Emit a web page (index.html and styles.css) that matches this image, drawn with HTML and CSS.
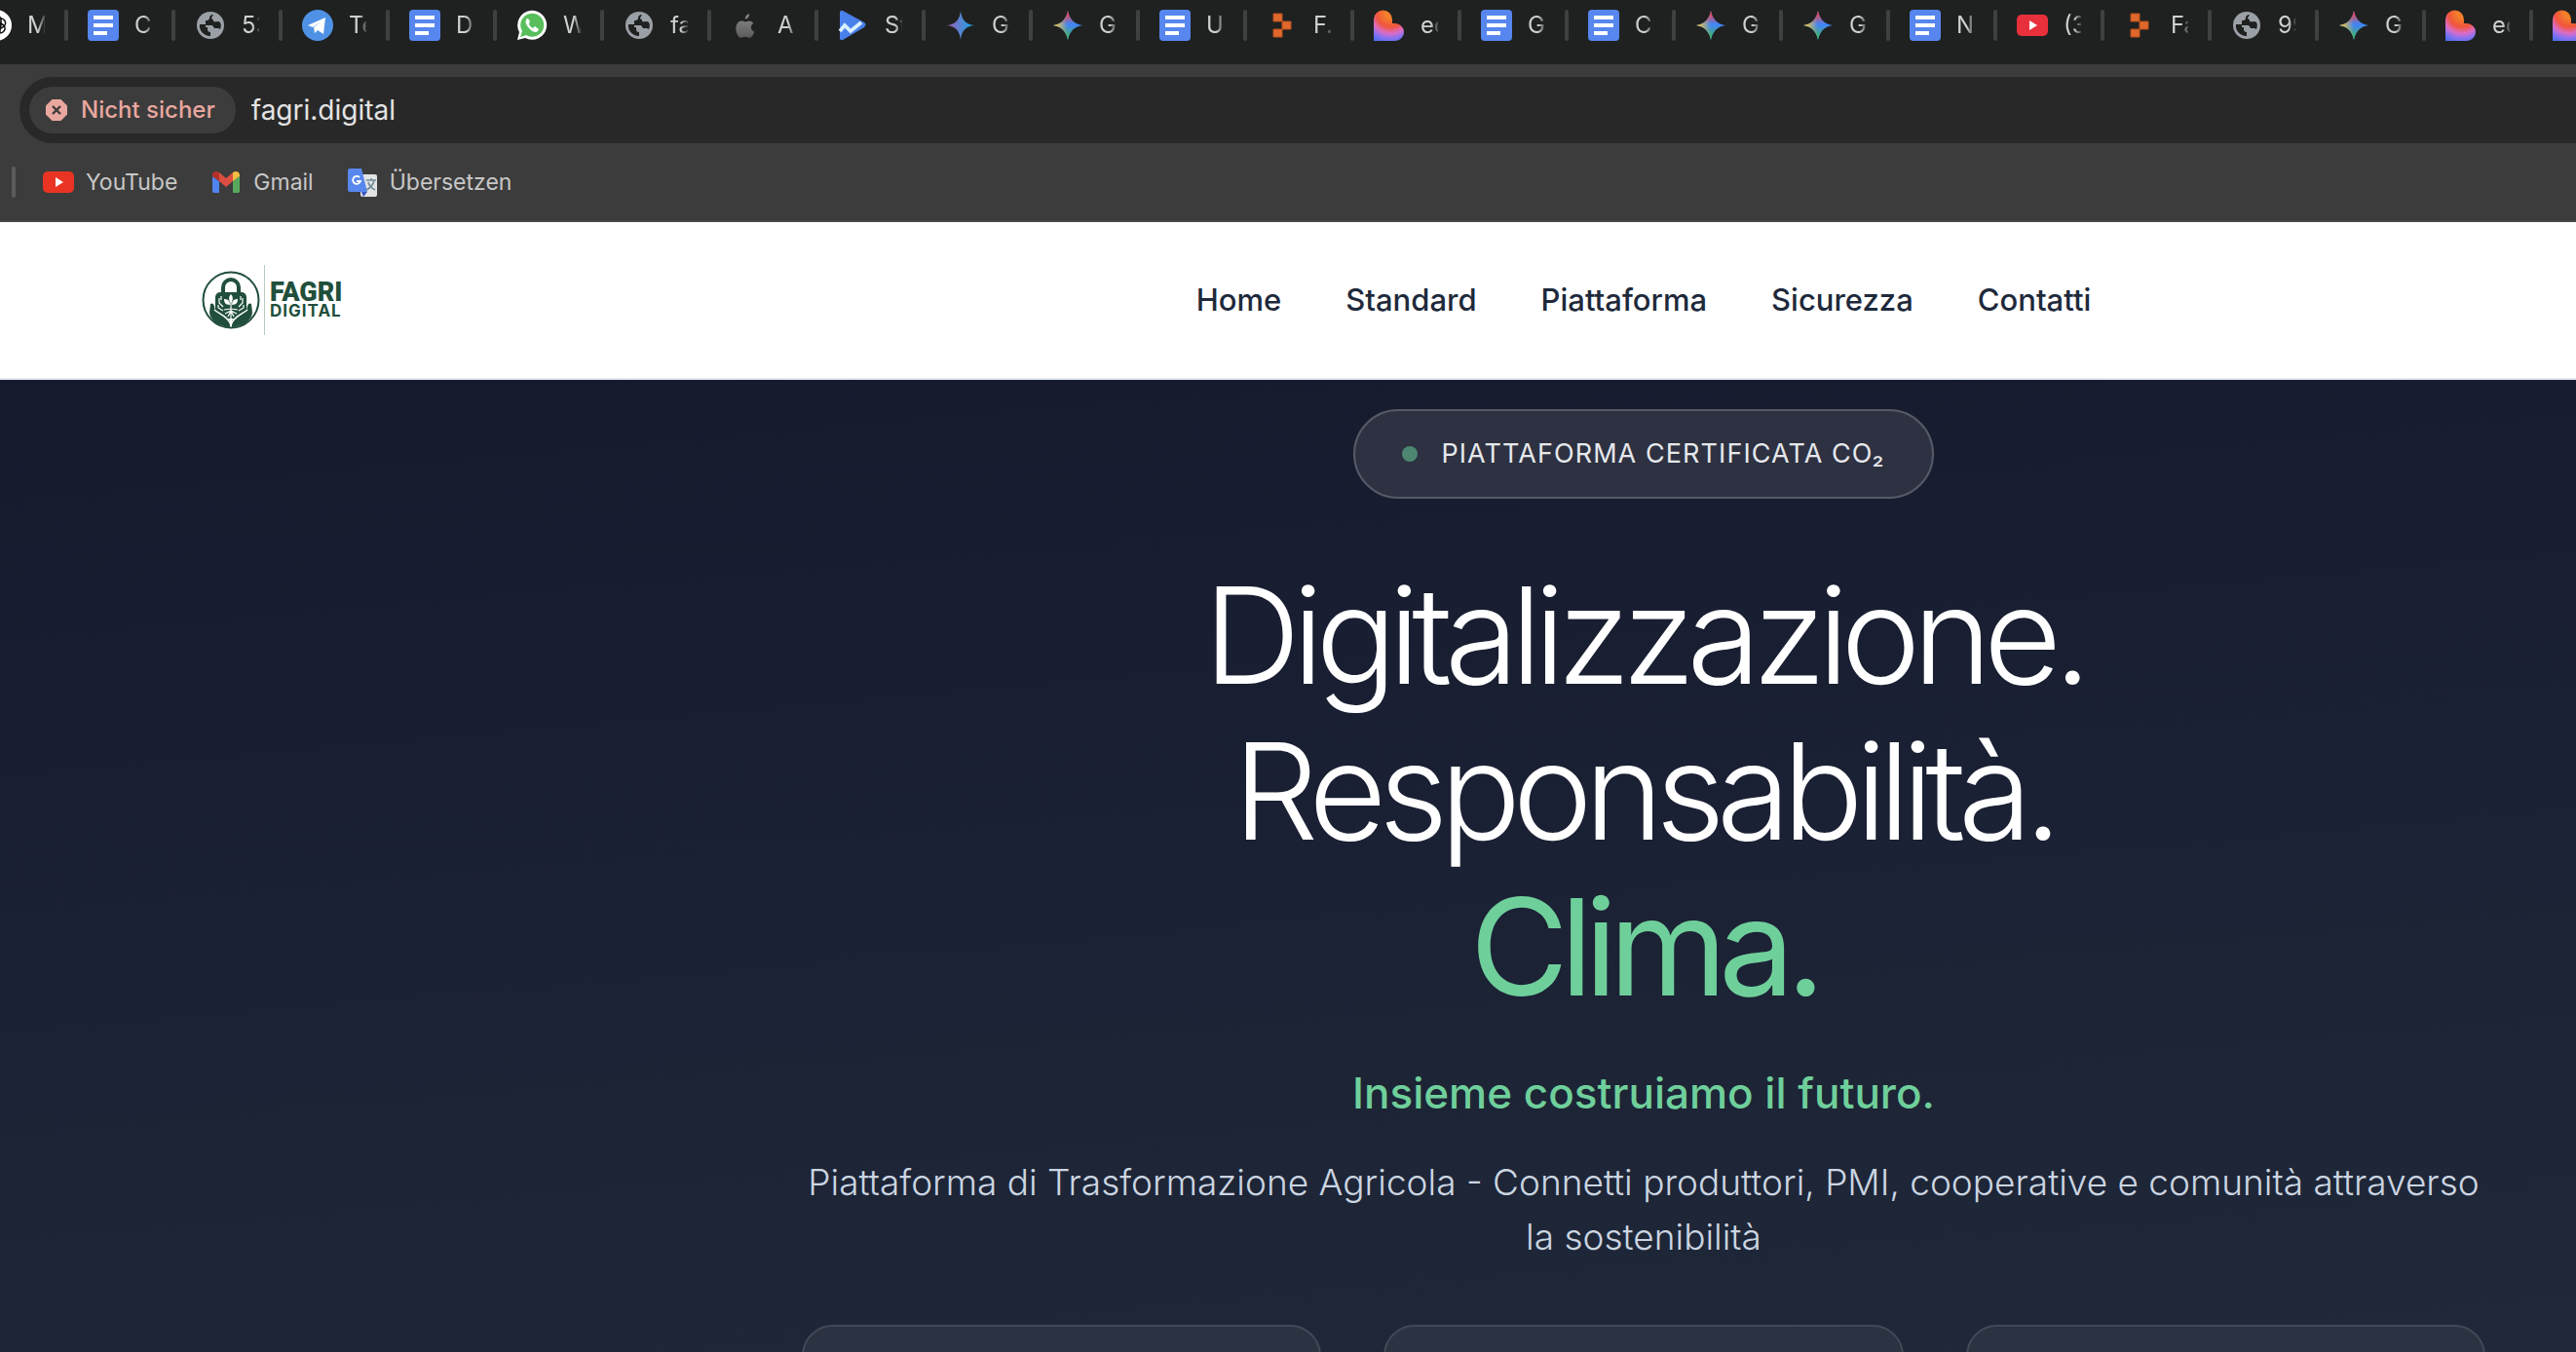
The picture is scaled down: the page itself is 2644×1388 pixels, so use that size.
FILE: index.html
```html
<!DOCTYPE html>
<html lang="it">
<head>
<meta charset="utf-8">
<title>fagri.digital</title>
<link rel="stylesheet" href="styles.css">
</head>
<body>
<svg class="defs" aria-hidden="true">
  <defs>
    <linearGradient id="gemBlue" x1="0" x2="1"><stop offset="0.1" stop-color="#9168c0"/><stop offset="0.5" stop-color="#5684d1"/><stop offset="0.9" stop-color="#1ba1e3"/></linearGradient>
    <linearGradient id="gemRed" x1="0" y1="0" x2="0" y2="1"><stop offset="0.1" stop-color="#f0434c"/><stop offset="0.45" stop-color="#f0434c" stop-opacity="0"/></linearGradient>
    <linearGradient id="gemYellow" x1="0" y1="0" x2="1" y2="0"><stop offset="0.05" stop-color="#fcc934"/><stop offset="0.5" stop-color="#fcc934" stop-opacity="0"/></linearGradient>
    <linearGradient id="gemGreen" x1="0" y1="1" x2="0" y2="0"><stop offset="0.1" stop-color="#3fb565"/><stop offset="0.5" stop-color="#3fb565" stop-opacity="0"/></linearGradient>
    <radialGradient id="heart" cx="0.55" cy="0.1" r="1"><stop offset="0.15" stop-color="#f5802a"/><stop offset="0.45" stop-color="#f0553c"/><stop offset="0.65" stop-color="#dd6cc4"/><stop offset="0.82" stop-color="#8a72f2"/><stop offset="1" stop-color="#4a6fe8"/></radialGradient>
    <linearGradient id="apple" x1="0" y1="0" x2="0" y2="1"><stop offset="0" stop-color="#888"/><stop offset="1" stop-color="#5c5c5c"/></linearGradient>
    <path id="star" d="M16 1c1.500 8 6 13.500 15 15-9 1.500-13.500 7-15 15-1.500-8-6-13.500-15-15 9-1.500 13.500-7 15-15z"/>
    <symbol id="i-docs" viewBox="0 0 32 32"><rect width="32" height="32" rx="4" fill="#5686ee"/><path d="M6 6h20v4H6zM6 14h20v4H6zM6 22h14v4H6z" fill="#fff"/></symbol>
    <symbol id="i-globe" viewBox="0 0 32 32"><circle cx="16" cy="16" r="14" fill="#9aa0a6"/><path d="M19 5c-2 0-4 1-4 3 0 3-2 3-4 3v4H5c-1 6 4 12 11 12v-4c-2 0-3-1-3-3v-2h-2v-2h6c2 0 2 2 3 3h4l2 1c2-5 0-8-2-8-3 0-5 1-5-1 0-1-1-1-2-2 0-2 2-3 2-4z" fill="#1f2120"/></symbol>
    <symbol id="i-telegram" viewBox="0 0 32 32"><circle cx="16" cy="16" r="16" fill="#4f92e5"/><path d="M6 16 24 8l-2 17-6-4-3 3-1-6 8-6-9 6z" fill="#fff"/></symbol>
    <symbol id="i-whatsapp" viewBox="0 0 32 32"><path d="M1 31l2-8A15 15 0 1 1 9 29z" fill="#fff"/><path d="M4 28l2-6a12 12 0 1 1 4 4z" fill="#58bf5b"/><path d="M11 9c-3 3-1 7 3 11s8 4 9 0l-4-3-2 2c-2-1-4-3-4-5l1-2-2-3z" fill="#fff"/></symbol>
    <symbol id="i-gpt" viewBox="0 0 32 32"><circle cx="16" cy="16" r="16" fill="#fff"/><g fill="none" stroke="#111" stroke-width="1.600"><rect x="12" y="6" width="9" height="14" rx="4.500" id="petal"/><use href="#petal" transform="rotate(60 16 16)"/><use href="#petal" transform="rotate(120 16 16)"/><use href="#petal" transform="rotate(180 16 16)"/><use href="#petal" transform="rotate(240 16 16)"/><use href="#petal" transform="rotate(300 16 16)"/></g></symbol>
    <symbol id="i-apple" viewBox="0 0 32 32"><path d="M16 12c2 0 3-1 5-1s4 1 5 3c-4 2-4 8 1 10-1 3-3 7-6 7-2 0-3-1-5-1s-3 1-5 1c-3 0-6-6-6-11s3-9 7-9c2 0 3 1 4 1zM16 9c0-3 2-6 5-6 0 3-2 6-5 6z" fill="url(#apple)" transform="translate(1 2) scale(.86)"/></symbol>
    <symbol id="i-wave" viewBox="0 0 32 32"><path d="M2 3q0-3 3-2l22 12q3 2 0 5L5 31q-3 1-3-2z" fill="#4a80ea"/><path d="M2 22l5-6 6 6 11-9" fill="none" stroke="#d8f0ff" stroke-width="3.600"/></symbol>
    <symbol id="i-gemblue" viewBox="0 0 32 32"><path d="M16 1c1 9 5 14 14 15-9 1-13 6-14 15-1-9-5-14-14-15 9-1 13-6 14-15z" fill="url(#gemBlue)"/></symbol>
    <symbol id="i-gem" viewBox="0 0 32 32"><use href="#star" fill="#4285f4"/><use href="#star" fill="url(#gemGreen)"/><use href="#star" fill="url(#gemYellow)"/><use href="#star" fill="url(#gemRed)"/></symbol>
    <symbol id="i-steps" viewBox="0 0 32 32"><path d="M7 4h9v8H7zM16 12h9v8h-9zM7 20h9v8H7z" fill="#e0682c" stroke="#b9501c"/></symbol>
    <symbol id="i-heart" viewBox="0 0 32 32"><path d="M0 32V10a9.500 9.500 0 0 1 19 0v4h3a9 9 0 0 1 0 18z" fill="url(#heart)"/></symbol>
    <symbol id="i-yt" viewBox="0 0 32 32"><rect y="5" width="32" height="22" rx="5" fill="currentColor"/><path d="M13 11v10l8-5z" fill="#fff"/></symbol>
  </defs>
</svg>

<header class="browser">
  <ul class="tabs">
    <li class="tab"><svg class="icon"><use href="#i-gpt"/></svg><span class="title">Me</span></li>
    <li class="tab"><svg class="icon"><use href="#i-docs"/></svg><span class="title">C</span></li>
    <li class="tab"><svg class="icon"><use href="#i-globe"/></svg><span class="title">53</span></li>
    <li class="tab"><svg class="icon"><use href="#i-telegram"/></svg><span class="title">Te</span></li>
    <li class="tab"><svg class="icon"><use href="#i-docs"/></svg><span class="title">D</span></li>
    <li class="tab"><svg class="icon"><use href="#i-whatsapp"/></svg><span class="title">W</span></li>
    <li class="tab"><svg class="icon"><use href="#i-globe"/></svg><span class="title">fa</span></li>
    <li class="tab"><svg class="icon"><use href="#i-apple"/></svg><span class="title">A</span></li>
    <li class="tab"><svg class="icon"><use href="#i-wave"/></svg><span class="title">St</span></li>
    <li class="tab"><svg class="icon"><use href="#i-gemblue"/></svg><span class="title">G</span></li>
    <li class="tab"><svg class="icon"><use href="#i-gem"/></svg><span class="title">G</span></li>
    <li class="tab"><svg class="icon"><use href="#i-docs"/></svg><span class="title">U</span></li>
    <li class="tab"><svg class="icon"><use href="#i-steps"/></svg><span class="title">F.</span></li>
    <li class="tab"><svg class="icon"><use href="#i-heart"/></svg><span class="title">ed</span></li>
    <li class="tab"><svg class="icon"><use href="#i-docs"/></svg><span class="title">G</span></li>
    <li class="tab"><svg class="icon"><use href="#i-docs"/></svg><span class="title">C</span></li>
    <li class="tab"><svg class="icon"><use href="#i-gem"/></svg><span class="title">G</span></li>
    <li class="tab"><svg class="icon"><use href="#i-gem"/></svg><span class="title">G</span></li>
    <li class="tab"><svg class="icon"><use href="#i-docs"/></svg><span class="title">N</span></li>
    <li class="tab"><svg class="icon video"><use href="#i-yt"/></svg><span class="title">(3</span></li>
    <li class="tab"><svg class="icon"><use href="#i-steps"/></svg><span class="title">Fa</span></li>
    <li class="tab"><svg class="icon"><use href="#i-globe"/></svg><span class="title">99</span></li>
    <li class="tab"><svg class="icon"><use href="#i-gem"/></svg><span class="title">G</span></li>
    <li class="tab"><svg class="icon"><use href="#i-heart"/></svg><span class="title">ed</span></li>
    <li class="tab"><svg class="icon"><use href="#i-heart"/></svg></li>
  </ul>
  <div class="toolbar">
    <div class="omnibox">
      <button class="chip" type="button">
        <svg width="24" height="24" viewBox="0 0 24 24"><path d="M7.500 1h9L23 7.500v9L16.500 23h-9L1 16.500v-9z" fill="#e9a79f"/><path d="M8 8l8 8M16 8l-8 8" stroke="#3c3c3c" stroke-width="2.400"/></svg>
        Nicht sicher
      </button>
      <input class="address" type="text" value="fagri.digital" aria-label="Adresse">
    </div>
    <nav class="bookmarks" aria-label="Lesezeichen">
      <a href="#"><svg class="icon video-alt"><use href="#i-yt"/></svg>YouTube</a>
      <a href="#"><svg class="icon" viewBox="0 0 32 32"><path d="M2 10l7 5v12H4q-2 0-2-2z" fill="#4f83ee"/><path d="M23 15l7-5v15q0 2-2 2h-5z" fill="#58a85c"/><path d="M9 6l7 6 7-6v9l-7 6-7-6z" fill="#dc4e41"/><path d="M2 9c0-4 4-5 7-3v9l-7-5z" fill="#b5302a"/><path d="M30 9c0-4-4-5-7-3v9l7-5z" fill="#f2bd42"/></svg>Gmail</a>
      <a href="#"><svg class="icon" viewBox="0 0 32 32"><rect x="14" y="8" width="17" height="23" rx="2" fill="#e2e4e6"/><path d="M3 2h12l6 24H3q-2 0-2-2V4q0-2 2-2z" fill="#5888ee"/><path d="M15 26h6l-4 5z" fill="#3b55c0"/><path d="M20 14h10M25 12v2M28 14c-1 5-4 8-8 10M22 16c1 4 3 6 7 8" stroke="#6f8b96" stroke-width="1.600" fill="none"/><path d="M13 11a4 4 0 1 0 1 4h-4" stroke="#fff" stroke-width="1.800" fill="none"/></svg>Übersetzen</a>
    </nav>
  </div>
</header>

<header class="site-header">
  <a class="brand" href="#" aria-label="Fagri Digital">
    <svg class="emblem" width="60" height="60" viewBox="0 0 60 60">
      <circle cx="30" cy="30" r="28.500" fill="none" stroke="#214f3b" stroke-width="2"/>
      <path d="M22 24v-7a8 8 0 0 1 16 0v7" fill="none" stroke="#214f3b" stroke-width="4"/>
      <rect x="14" y="22" width="32" height="27" rx="5" fill="#214f3b"/>
      <path d="M9 34c3-2 4 1 5 7 5 2 10 6 15 10v7C17 57 9 51 8 43zM51 34c-3-2-4 1-5 7-5 2-10 6-15 10v7c12-1 20-7 21-15z" fill="#214f3b"/>
      <path d="M13 40c4 4 15 7 17 16 2-9 13-12 17-16" fill="none" stroke="#fff" stroke-width="1.400"/>
      <path d="M30 56V31M30 41l-6 3M30 41l6 3M30 39l-7 1M30 39l7 1M30 41l-3 6M30 41l3 6" stroke="#fff" stroke-width="1.200" fill="none"/>
      <path d="M30 24c3 3 2 7 0 9-2-2-3-6 0-9zM29 35c-5 0-6-3-6-6 4 0 6 2 6 6zM31 35c5 0 6-3 6-6-4 0-6 2-6 6z" fill="#fff"/>
      <path d="M18 28v5l4 4M20 26v4M17 35v3l5 3M42 28v5l-4 4M40 26v4M43 35v3l-5 3" stroke="#fff" stroke-width="1.200" fill="none"/>
    </svg>
    <span class="wordmark"><span class="word-big">FAGRI</span><span class="word-small">DIGITAL</span></span>
  </a>
  <nav class="menu" aria-label="Principale">
    <a href="#">Home</a>
    <a href="#">Standard</a>
    <a href="#">Piattaforma</a>
    <a href="#">Sicurezza</a>
    <a href="#">Contatti</a>
  </nav>
</header>

<main class="hero">
  <p class="badge"><span class="dot"></span>PIATTAFORMA CERTIFICATA CO₂</p>
  <h1>Digitalizzazione.<br>Responsabilità.<br><span class="accent">Clima.</span></h1>
  <p class="tagline">Insieme costruiamo il futuro.</p>
  <p class="lead">Piattaforma di Trasformazione Agricola - Connetti produttori, PMI, cooperative e comunità attraverso la sostenibilità</p>
  <div class="cards">
    <section class="card"></section>
    <section class="card"></section>
    <section class="card"></section>
  </div>
</main>
</body>
</html>
```
FILE: styles.css
```css
* { box-sizing: border-box; }

:root {
  --offset: 730px; /* the layout is centred on a page wider than the window */
}

body {
  margin: 0;
  height: 100vh;
  display: flex;
  flex-direction: column;
  overflow: hidden;
  font-family: Inter, "Liberation Sans", sans-serif;
}

a { color: inherit; text-decoration: none; }
p, h1, ul { margin: 0; }
svg { display: block; flex: none; }

.defs { position: absolute; width: 0; height: 0; }
.icon { width: 32px; height: 32px; }
.video { color: #e8303c; }
.video-alt { color: #e93423; }

/* Browser chrome */
.browser { flex: none; background: #3c3c3c; }

.tabs {
  display: flex;
  height: 66px;
  padding: 10px 0 24px;
  overflow: hidden;
  list-style: none;
  background: #1f2120;
}

.tab {
  flex: none;
  display: flex;
  align-items: center;
  gap: 16px;
  width: 110px;
  height: 32px;
  padding-left: 20px;
}

.tab::after {
  content: "";
  width: 4px;
  height: 32px;
  margin-left: auto;
  border-radius: 2px;
  background: #3f4140;
}

.tab:first-child { margin-left: -40px; }

.title {
  width: 18px;
  overflow: hidden;
  white-space: nowrap;
  font-size: 24px;
  line-height: 32px;
  color: #cfd1cf;
  mask-image: linear-gradient(to right, #000 60%, transparent 110%);
}

.toolbar {
  padding: 13px 0 23px 20px;
  border-bottom: 2px solid #474747;
}

.omnibox {
  display: flex;
  align-items: center;
  gap: 16px;
  height: 68px;
  padding-left: 10px;
  border-radius: 34px 0 0 34px;
  background: #282828;
}

.chip {
  display: flex;
  align-items: center;
  gap: 13px;
  height: 48px;
  padding: 0 21px 0 16px;
  border: 0;
  border-radius: 24px;
  background: #3c3c3c;
  color: #e9a79f;
  font: 500 24px/32px Inter, "Liberation Sans", sans-serif;
}

.address {
  flex: 1;
  min-width: 0;
  padding: 0;
  border: 0;
  background: none;
  color: #e3e3e3;
  font: 400 28px/40px Inter, "Liberation Sans", sans-serif;
}

.bookmarks {
  display: flex;
  align-items: center;
  gap: 34px;
  height: 32px;
  margin: 24px 0 0 -8px;
  font-size: 23px;
  line-height: 32px;
  color: #c7c7c7;
}

.bookmarks::before {
  content: "";
  width: 4px;
  height: 32px;
  margin-right: -6px;
  border-radius: 2px;
  background: #5c5c5c;
}

.bookmarks a { display: flex; align-items: center; gap: 12px; }

/* Site header */
.site-header {
  flex: none;
  display: flex;
  align-items: center;
  height: 162px;
  padding-left: 207px;
  border-bottom: 2px solid #e2e8f0;
  background: #fff;
}

.brand {
  display: flex;
  align-items: center;
  gap: 4px;
  width: calc(var(--offset) - 207px);
  color: #214f3b;
}

.wordmark {
  display: flex;
  flex-direction: column;
  justify-content: center;
  height: 72px;
  padding-left: 5px;
  border-left: 1px solid #b9c9c1;
}

.word-big { font: 900 27px/22px Roboto, sans-serif; }
.word-small { font: 700 17px/16px Inter, sans-serif; letter-spacing: 1px; }

.menu {
  flex: 1;
  display: flex;
  justify-content: center;
  gap: 66px;
  font-size: 31px;
  line-height: 40px;
  font-weight: 500;
  color: #1e293b;
}

/* Hero */
.hero {
  flex: 1;
  display: flex;
  flex-direction: column;
  align-items: center;
  min-height: 0;
  padding: 30px 0 0 var(--offset);
  overflow: hidden;
  text-align: center;
  background: linear-gradient(175deg, #151a2d, #1b2134 50%, #1f2939);
}

.badge {
  flex: none;
  display: flex;
  align-items: center;
  gap: 24px;
  height: 92px;
  padding: 0 48px;
  border: 2px solid #565a67;
  border-radius: 46px;
  background: #2d3141;
  color: #e6e8ec;
  font-size: 27px;
  line-height: 40px;
  letter-spacing: 0.04em;
}

.dot { width: 16px; height: 16px; border-radius: 50%; background: #4d8771; }

h1 {
  margin-top: 60px;
  font-size: 138px;
  line-height: 160px;
  font-weight: 300;
  letter-spacing: -0.06em;
  color: #fff;
}

.accent { font-weight: 400; color: #6fcf9b; }

.tagline {
  margin-top: 38px;
  font-size: 44px;
  line-height: 64px;
  font-weight: 500;
  color: #6fcf9b;
}

.lead {
  width: 1728px;
  max-width: 100%;
  margin-top: 32px;
  font-size: 37px;
  line-height: 56px;
  font-weight: 300;
  color: #cbd5e1;
}

.cards {
  display: grid;
  grid-template-columns: repeat(3, 1fr);
  gap: 64px;
  width: 1728px;
  max-width: 100%;
  margin-top: 62px;
}

.card {
  height: 320px;
  border: 2px solid #424856;
  border-radius: 32px;
  background: #2b3241;
}
```
